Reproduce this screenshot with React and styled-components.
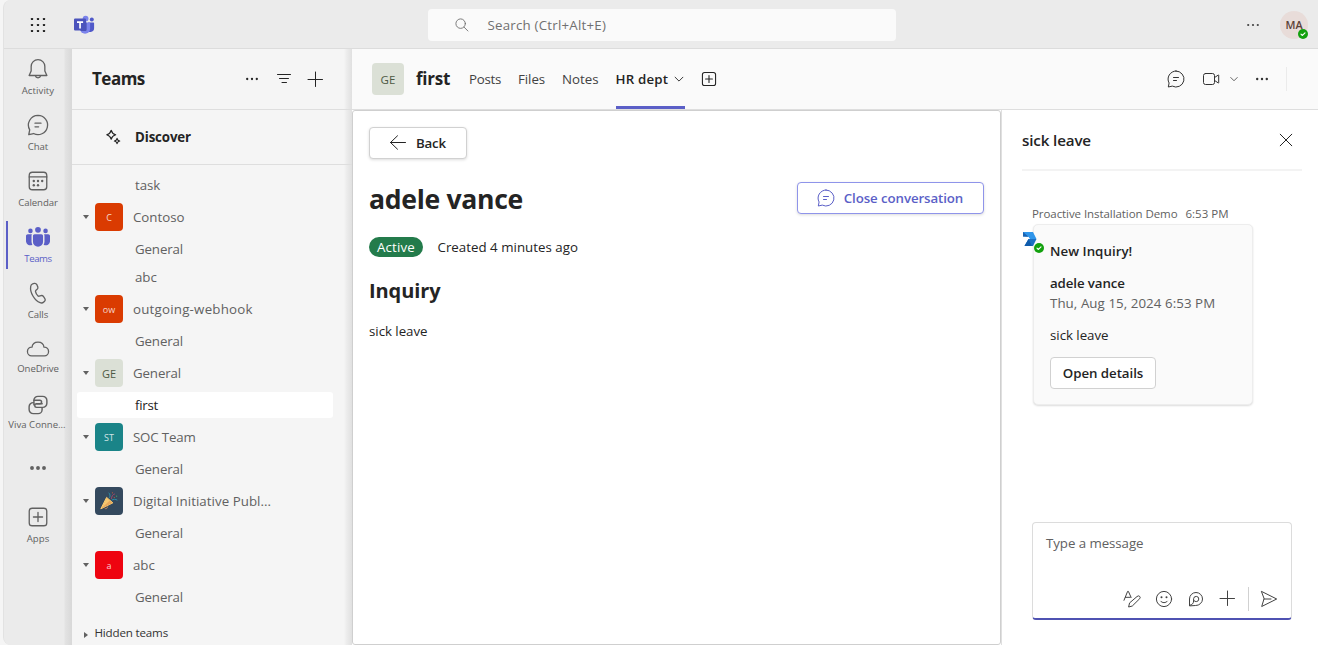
import React from "react";
import styled, { createGlobalStyle } from "styled-components";

const GlobalStyle = createGlobalStyle`
  * { box-sizing: border-box; }
  body {
    margin: 0;
    background: #f5f5f5;
    font-family: "Open Sans", "Noto Sans", sans-serif;
    color: #242424;
    overflow: hidden;
  }
  button { font-family: inherit; }
`;

const Window = styled.div`
  height: 645px;
  margin-left: 3px;
  display: flex;
  flex-direction: column;
  background: #ebebeb;
  border-left: 1px solid #e2e2e2;
  border-radius: 8px 0 0 8px;
  overflow: hidden;
`;

const Text = styled.span`
  font-size: ${(p) => p.$size || 13.3}px;
  font-weight: ${(p) => p.$weight || 400};
  letter-spacing: ${(p) => p.$ls || 0}px;
  color: ${(p) => p.$color || "inherit"};
  white-space: nowrap;
`;

/* ---------- icons ---------- */

const Glyph = styled.svg`
  display: block;
  flex: none;
  fill: none;
  stroke: currentColor;
  stroke-width: ${(p) => p.$stroke || 1};
  stroke-linecap: round;
  stroke-linejoin: round;
`;

const Icon = ({ size = 20, stroke, children }) => (
  <Glyph width={size} height={size} viewBox="0 0 20 20" $stroke={stroke}>
    {children}
  </Glyph>
);

const Dots = ({ size = 20, r = 1.15, gap = 4.8 }) => (
  <Icon size={size}>
    <g fill="currentColor" stroke="none">
      <circle cx={10 - gap} cy="10" r={r} />
      <circle cx="10" cy="10" r={r} />
      <circle cx={10 + gap} cy="10" r={r} />
    </g>
  </Icon>
);

const WaffleIcon = () => (
  <Icon>
    <g fill="#242424" stroke="none">
      {[4, 10, 16].map((y) => [4, 10, 16].map((x) => (
        <rect key={`${x}-${y}`} x={x - 1.1} y={y - 1.1} width="2.2" height="2.2" rx="0.6" />
      )))}
    </g>
  </Icon>
);

const TeamsLogo = () => (
  <Glyph width="22" height="20" viewBox="0 0 22 20">
    <g stroke="none">
      <circle cx="18.8" cy="4.6" r="2" fill="#5059c9" />
      <path d="M15 7.6h5.4a.7.7 0 0 1 .7.7v5a3.6 3.6 0 0 1-3.4 3.6h-1.8z" fill="#5059c9" />
      <circle cx="12.6" cy="3.6" r="2.9" fill="#7b83eb" />
      <path d="M7 7.6h9.3c.5 0 .8.4.8.8v5.3a5 5 0 0 1-10.1 0z" fill="#7b83eb" />
      <path d="M9 7.6h4.6v7.1a1.2 1.2 0 0 1-1.2 1.2H7.6z" fill="#3a41a0" opacity=".75" />
      <rect x="1" y="3.6" width="12" height="12" rx="1.1" fill="#4b53bc" />
      <path d="M4 6.3h6.1v1.6H7.9v5.5H6.2V7.9H4z" fill="#fff" />
    </g>
  </Glyph>
);

const BellIcon = () => (
  <Icon size={24} stroke={1.1}>
    <path d="M10 2.2a5.7 5.7 0 0 0-5.7 5.7v3.8L2.6 15.4h14.8l-1.7-3.7V7.9a5.7 5.7 0 0 0-5.7-5.7z" />
    <path d="M7.8 15.6a2.25 2.25 0 0 0 4.4 0" />
  </Icon>
);

const ChatIcon = ({ size = 24, stroke = 1.1 }) => (
  <Icon size={size} stroke={stroke}>
    <path d="M10 2a8 8 0 1 1-3.7 15.1L2.3 18l.8-4A8 8 0 0 1 10 2z" />
    <path d="M7.5 8.5h5M7.5 11.5h3" />
  </Icon>
);

const CalendarIcon = () => (
  <Icon size={24} stroke={1.1}>
    <rect x="2.7" y="2.7" width="14.6" height="14.6" rx="2.6" />
    <path d="M2.7 6.6h14.6" />
    <g fill="currentColor" stroke="none">
      <circle cx="6.5" cy="10" r="1" />
      <circle cx="10" cy="10" r="1" />
      <circle cx="13.5" cy="10" r="1" />
      <circle cx="6.5" cy="13.5" r="1" />
      <circle cx="10" cy="13.5" r="1" />
    </g>
  </Icon>
);

const PeopleIcon = () => (
  <Icon size={24}>
    <g fill="currentColor" stroke="none">
      <circle cx="3.7" cy="4.9" r="1.9" />
      <circle cx="10" cy="4" r="2.4" />
      <circle cx="16.3" cy="4.9" r="1.9" />
      <path d="M7.2 7.7h5.6c.8 0 1.4.6 1.4 1.4v4.8a4.2 4.2 0 0 1-8.4 0V9.1c0-.8.6-1.4 1.4-1.4z" />
      <path d="M1.5 7.7h3.5c-.3.4-.4.9-.4 1.4v4.7c0 1 .3 1.9.7 2.700A3.600 3.600 0 0 1 0 13.100V9.200c0-.8.7-1.500 1.500-1.500zM18.500 7.700h-3.500c.3.4.4.9.4 1.400v4.700c0 1-.3 1.900-.7 2.700a3.600 3.600 0 0 0 5.300-3.400V9.200c0-.8-.7-1.500-1.500-1.500z" />
    </g>
  </Icon>
);

const PhoneIcon = () => (
  <Icon size={24} stroke={1.1}>
    <path d="M5.500 2.400l1.400-.4c.9-.2 1.700.2 2.100 1l.8 1.900c.3.700.1 1.500-.5 2l-1.200 1.100c-.2.200-.3.400-.2.700.2 1.400 1.300 3.100 2.300 3.900.2.200.5.200.8.100l1.500-.5c.7-.2 1.500 0 2 .7l1.200 1.700c.5.700.4 1.600-.2 2.200l-.7.7c-.8.8-2 1-3 .6-4.700-1.800-8.700-8.700-7.900-13.500.1-1.100.6-1.900 1.600-2.200z" />
  </Icon>
);

const CloudIcon = () => (
  <Icon size={24} stroke={1.1}>
    <path d="M5 8.500C5.300 5.800 7.300 4.200 10 4.200s4.700 1.600 5 4.300a3.650 3.650 0 0 1 .3 7.300H4.700a3.650 3.650 0 0 1 .3-7.300z" />
  </Icon>
);

const VivaIcon = () => (
  <Icon size={24} stroke={1.2}>
    <path d="M6.600 9.900V6.100a3.300 3.300 0 0 1 3.300-3.300h4a3.500 3.500 0 0 1 3.500 3.500v2.200a3.500 3.500 0 0 1-3.500 3.500H8.800a1.500 1.500 0 0 1 0-3h4.700" />
    <path d="M13.400 12.200v1.700a3.300 3.300 0 0 1-3.300 3.300h-4a3.500 3.500 0 0 1-3.500-3.500v-2.200A3.500 3.500 0 0 1 6.100 8M6.600 6h4.900a1.500 1.500 0 0 1 0 3H8.800" />
  </Icon>
);

const PlusBoxIcon = ({ size = 24, stroke = 1.1 }) => (
  <Icon size={size} stroke={stroke}>
    <rect x="2.7" y="2.7" width="14.6" height="14.6" rx="2.4" />
    <path d="M10 6.200v7.600M6.200 10h7.600" />
  </Icon>
);

const FilterIcon = () => (
  <Icon><path d="M3.500 5.500h13M5.500 9.500h9M8 13.500h4.500" /></Icon>
);
const PlusIcon = () => (
  <Icon><path d="M10.500 3v14.500M3 10.500h14.500" /></Icon>
);
const AttachIcon = () => (
  <Icon><path d="M9.500 2v14.500M2 9.500h14.500" /></Icon>
);
const SparkleIcon = () => (
  <Icon size={18} stroke={1.2}>
    <path d="M8 2.500Q9 6.500 13 7.500Q9 8.500 8 12.500Q7 8.500 3 7.500Q7 6.500 8 2.500zM14.500 11.500Q15 14 17.500 14.500Q15 15 14.500 17.500Q14 15 11.500 14.500Q14 14 14.500 11.500z" />
  </Icon>
);
const SearchIcon = () => (
  <Icon size={16} stroke={1.15}><circle cx="8.3" cy="8.3" r="5.9" /><path d="M12.600 12.700l4.800 4.800" /></Icon>
);
const ChevronIcon = ({ size = 12 }) => (
  <Icon size={size} stroke={1.5}><path d="M3.500 7l6.500 6.500L16.500 7" /></Icon>
);
const VideoIcon = () => (
  <Icon><rect x="2.5" y="4.5" width="11" height="11" rx="2" /><path d="M13.500 8.600l3.800-2.600c.2-.1.4 0 .4.300v7.400c0 .3-.2.4-.4.300l-3.800-2.600" /></Icon>
);
const ArrowLeftIcon = () => (
  <Icon><path d="M17.500 9.500H2.500M9.500 2.800L2.500 9.500l7 6.700" /></Icon>
);
const CloseIcon = () => (
  <Icon><path d="M4.200 4.200l11.600 11.600M15.800 4.200L4.200 15.800" /></Icon>
);
const FormatIcon = () => (
  <Icon>
    <path d="M2 11.300L5.600 2.400h.8l2.700 6M3.400 8.300h4.900" />
    <path d="M15.300 7.300a1.700 1.700 0 0 1 2.400 2.400L10.300 17l-3.700 1 .9-3.700z" />
  </Icon>
);
const SmileIcon = () => (
  <Icon>
    <circle cx="10" cy="10" r="7.6" />
    <path d="M6.700 12.200c1.600 2 5 2 6.600 0" />
    <g fill="currentColor" stroke="none"><circle cx="7.5" cy="8.3" r="1" /><circle cx="12.5" cy="8.3" r="1" /></g>
  </Icon>
);
const LoopIcon = () => (
  <Icon>
    <path d="M3.500 16.500V10A6.500 6.500 0 1 1 10 16.500z" />
    <path d="M3.700 16.300c2.500-.4 3.900-2 3.900-4.300V9.700a2.600 2.600 0 1 1 2.700 2.900c-.9 0-1.600-.3-2.200-.9" />
  </Icon>
);
const SendIcon = () => (
  <Icon><path d="M2.700 2.500L17.700 10 2.700 17.500 5 10zM5 10h7" /></Icon>
);

const Caret = styled.span`
  flex: none;
  width: 0;
  height: 0;
  border: 3.5px solid transparent;
  ${(p) => (p.$closed
    ? "border-left: 4px solid #616161; border-right: 0;"
    : "border-top: 4px solid #616161; border-bottom: 0;")}
`;

const PresenceDot = styled.span`
  position: absolute;
  right: ${(p) => p.$right || 0}px;
  bottom: ${(p) => p.$bottom || 0}px;
  width: 10px;
  height: 10px;
  border-radius: 50%;
  background: #13a10e;
  color: #fff;
  display: flex;
  align-items: center;
  justify-content: center;
`;

const Presence = (props) => (
  <PresenceDot {...props}>
    <Icon size={8} stroke={2.8}><path d="M5 10.500l3.500 3.200L15 7" /></Icon>
  </PresenceDot>
);

/* ---------- top bar ---------- */

const TopBar = styled.header`
  flex: none;
  height: 49px;
  display: grid;
  grid-template-columns: 424px 468px 1fr;
  align-items: center;
  border-bottom: 1px solid #dcdcdc;
`;
const Brand = styled.div`
  display: flex;
  align-items: center;
  gap: 25px;
  padding: 1px 0 0 24px;
`;
const SearchBox = styled.div`
  height: 32px;
  margin-top: 1px;
  border-radius: 4px;
  background: #fafafa;
  display: flex;
  align-items: center;
  gap: 17.5px;
  padding-left: 26px;
  color: #707070;
`;
const Account = styled.div`
  display: flex;
  align-items: center;
  justify-content: flex-end;
  gap: 17px;
  padding: 2px 10px 0 0;
  color: #424242;
`;
const Avatar = styled.div`
  position: relative;
  width: 28px;
  height: 28px;
  padding-bottom: 1px;
  border-radius: 50%;
  background: #e8dcd9;
  display: flex;
  align-items: center;
  justify-content: center;
`;

/* ---------- rail ---------- */

const Body = styled.div`
  flex: 1;
  min-height: 0;
  display: flex;
`;
const Rail = styled.nav`
  flex: none;
  width: 68px;
  background: linear-gradient(to right, #ebebeb 60px, #e3e3e3 61px, #d8d8d8);
`;
const RailItem = styled.div`
  height: 56px;
  padding-top: ${(p) => p.$top || 8}px;
  display: flex;
  flex-direction: column;
  align-items: center;
  color: ${(p) => (p.$active ? "#5b5fc7" : "#616161")};
  background: ${(p) => (p.$active ? "linear-gradient(#5b5fc7, #5b5fc7) 2px 4px / 2px 48px no-repeat" : "none")};
`;
const RailLabel = styled(Text)`
  line-height: 14px;
  margin-top: ${(p) => (p.$tight ? 1 : 3)}px;
  padding-right: ${(p) => p.$inset || 0}px;
`;

/* ---------- team list ---------- */

const Sidebar = styled.aside`
  flex: none;
  width: 280px;
  background: linear-gradient(to right, #f5f5f5 272px, #eeeeee 274px, #e0e0e0);
`;
const SideHeader = styled.div`
  height: 61px;
  border-bottom: 1px solid #dedede;
  display: flex;
  align-items: center;
  gap: 12px;
  padding: 0 27px 0 20px;
`;
const SideTitle = styled.div`
  flex: 1;
  display: flex;
  padding-bottom: 2px;
`;
const SideActions = styled.div`
  display: flex;
  gap: 12px;
  margin-right: -1px;
`;
const Discover = styled.div`
  height: 55px;
  border-bottom: 1px solid #dedede;
  display: flex;
  align-items: center;
  gap: 13px;
  padding-left: 32px;
`;
const TeamList = styled.div`
  padding-top: 6px;
  color: #616161;
`;
const Channel = styled.div`
  height: ${(p) => (p.$active ? 26 : 28)}px;
  margin: ${(p) => (p.$active ? "1px 19px 1px 5px" : "0 19px 0 5px")};
  padding-left: 58px;
  display: flex;
  align-items: center;
  border-radius: 3px;
  background: ${(p) => (p.$active ? "#fff" : "transparent")};
  color: ${(p) => (p.$active ? "#242424" : "inherit")};
`;
const TeamRow = styled.div`
  height: 36px;
  display: flex;
  align-items: center;
  padding-left: 11px;
`;
const TeamTile = styled.div`
  flex: none;
  width: ${(p) => p.$size || 28}px;
  height: ${(p) => p.$size || 28}px;
  margin: 0 10px 0 6px;
  border-radius: 4px;
  background: ${(p) => p.$bg};
  color: ${(p) => p.$fg || "rgba(255,255,255,.8)"};
  display: flex;
  align-items: center;
  justify-content: center;
`;
const HiddenRow = styled.div`
  height: 43px;
  display: flex;
  align-items: center;
  gap: 6.5px;
  padding-left: 12px;
  color: #333;
`;
const CaretDrop = styled.span`
  display: flex;
  padding-top: 5px;
`;

/* ---------- main ---------- */

const Main = styled.main`
  flex: 1;
  min-width: 0;
  display: flex;
  flex-direction: column;
  background: #fff;
`;
const ChannelHeader = styled.div`
  flex: none;
  height: 61px;
  background: #fafafa;
  border-bottom: 1px solid #dedede;
  display: flex;
  align-items: center;
  padding: 0 31px 0 20px;
`;
const HeaderTile = styled(TeamTile)`
  margin: 0 12px 0 0;
`;
const ChannelName = styled(Text)`
  padding-bottom: 2px;
`;
const Tabs = styled.div`
  align-self: stretch;
  display: flex;
  gap: 17px;
  margin: 0 15px 0 19px;
`;
const Tab = styled.div`
  display: flex;
  align-items: center;
  gap: 5px;
  padding-top: ${(p) => (p.$active ? 3 : 0)}px;
  border-bottom: ${(p) => (p.$active ? "3px solid #5b5fc7" : "0")};
  color: ${(p) => (p.$active ? "#242424" : "#424242")};
`;
const HeaderActions = styled.div`
  display: flex;
  align-items: center;
  color: #333;
  margin-left: auto;
`;
const ActionGroup = styled.div`
  display: flex;
  align-items: center;
  gap: ${(p) => p.$gap || 0}px;
  margin-right: ${(p) => p.$mr || 0}px;
`;
const Divider = styled.span`
  width: 1px;
  height: ${(p) => p.$h}px;
  background: ${(p) => p.$color};
`;
const Split = styled.div`
  flex: 1;
  min-height: 0;
  display: flex;
`;
const Content = styled.section`
  width: 649px;
  border: 1px solid #cfcfcf;
  border-radius: 3px;
  padding: 16px 16px 0;
`;
const Button = styled.button`
  height: 32px;
  width: ${(p) => p.$w}px;
  padding: 0 ${(p) => p.$inset || 0}px 0 0;
  display: flex;
  align-items: center;
  justify-content: center;
  gap: ${(p) => p.$gap || 8}px;
  background: #fff;
  border: 1px solid ${(p) => (p.$brand ? "#8f94ea" : "#d1d1d1")};
  border-radius: 4px;
  color: ${(p) => (p.$brand ? "#5b5fc7" : "#242424")};
  box-shadow: ${(p) => (p.$flat ? "none" : "0 1px 3px rgba(0,0,0,.14)")};
`;
const TitleRow = styled.div`
  display: flex;
  align-items: center;
  justify-content: space-between;
  margin-top: 19px;
  height: 40px;
`;
const PageTitle = styled(Text)`
  padding-top: 2px;
`;
const StatusRow = styled.div`
  display: flex;
  align-items: center;
  gap: 14.5px;
  height: 20px;
  margin-top: 19px;
`;
const Badge = styled.span`
  width: 54px;
  height: 20px;
  border-radius: 10px;
  background: #237b4b;
  color: #fff;
  display: flex;
  align-items: center;
  justify-content: center;
`;
const SectionTitle = styled.div`
  height: 28px;
  margin-top: 19px;
  display: flex;
  align-items: center;
`;
const Paragraph = styled.div`
  height: 20px;
  margin-top: 17px;
  display: flex;
  align-items: center;
`;

/* ---------- conversation panel ---------- */

const Panel = styled.section`
  flex: 1;
  display: flex;
  flex-direction: column;
  border-left: 1px solid #e0e0e0;
  padding: 0 16px 0 20px;
`;
const PanelHeader = styled.div`
  height: 61px;
  border-bottom: 2px solid #f3f3f3;
  display: flex;
  align-items: center;
  justify-content: space-between;
  padding-right: 6px;
`;
const Byline = styled.div`
  display: flex;
  align-items: center;
  gap: 8px;
  height: 16px;
  margin: 34px 0 3px 10px;
  color: #616161;
`;
const Message = styled.div`
  position: relative;
  margin-left: 11px;
  width: 220px;
  height: 181px;
  padding: 16px;
  background: #fafafa;
  border: 1px solid #ededed;
  border-radius: 5px;
  box-shadow: 0 1px 2px rgba(0,0,0,.14);
  color: #242424;
`;
const Line = styled.div`
  height: 20px;
  display: flex;
  align-items: center;
  margin-bottom: ${(p) => p.$mb || 0}px;
  color: ${(p) => p.$color || "inherit"};
`;
const BotBadge = styled.div`
  position: absolute;
  left: -11px;
  top: 7px;
  width: 22px;
  height: 22px;
`;
const Composer = styled.div`
  margin: auto 10px 25px 10px;
  height: 98px;
  border: 1px solid #dcdcdc;
  border-bottom: 2px solid #4f52b2;
  border-radius: 4px;
  padding: 11px 12px 0 13px;
  display: flex;
  flex-direction: column;
  justify-content: space-between;
`;
const Tools = styled.div`
  display: flex;
  align-items: center;
  justify-content: flex-end;
  gap: 12px;
  height: 24px;
  margin-bottom: 7px;
  color: #424242;
`;
const SendGroup = styled.div`
  display: flex;
  align-items: center;
  gap: 10px;
  margin-left: -2px;
`;

const PartyIcon = () => (
  <Glyph width="20" height="20" viewBox="0 0 20 20">
    <path d="M2 17.500L7.600 6.400l6 5.200z" fill="#f6c770" stroke="#f6c770" strokeWidth="1" />
    <path d="M2 17.500l8.600-7.800 3 2z" fill="#e9a85c" stroke="none" />
    <path d="M5.500 16.800c.8 1.600 2.800 1.200 3-.8" stroke="#c98a5a" />
    <path d="M10.500 6.500c1-1.500.5-3.500-.5-4.500M13 9c1.500-1 3.500-1 5 0" stroke="#2d8fa8" />
    <path d="M12.500 7.500c0-2 1-4 3-4.500" stroke="#a0476a" />
    <circle cx="13.5" cy="1.8" r=".6" fill="#c5533e" stroke="none" />
    <circle cx="17.6" cy="5.2" r=".6" fill="#4f9e63" stroke="none" />
    <circle cx="15.3" cy="6.5" r=".6" fill="#c5533e" stroke="none" />
  </Glyph>
);

const BotIcon = () => (
  <Glyph width="15" height="15" viewBox="0 0 15 15">
    <g stroke="none">
      <path d="M0 0h10l3.500 7H7L5.500 4.800 0 4.500z" fill="#2f95ea" />
      <path d="M5.500 7h8L10 14H1.500z" fill="#1b6fc4" />
      <path d="M1.500 14l4-7L9 14z" fill="#0f5bab" />
      <path d="M0 0l5.500 4.800L0 4.500z" fill="#1a62b0" />
    </g>
  </Glyph>
);

const railItems = [
  { label: "Activity", ls: 0.07, icon: <BellIcon /> },
  { label: "Chat", ls: -0.05, icon: <ChatIcon /> },
  { label: "Calendar", ls: -0.09, icon: <CalendarIcon /> },
  { label: "Teams", ls: -0.39, icon: <PeopleIcon />, active: true },
  { label: "Calls", ls: -0.05, icon: <PhoneIcon /> },
  { label: "OneDrive", ls: -0.09, icon: <CloudIcon />, tight: true },
  { label: "Viva Conne...", ls: 0, icon: <VivaIcon />, tight: true, inset: 2 },
];

const general = { name: "General", ls: -0.13 };

const teams = [
  { name: "Contoso", ls: -0.02, tile: "C", bg: "#da3b01", channels: [general, { name: "abc", ls: -0.05 }] },
  { name: "outgoing-webhook", ls: 0.22, tile: "ow", bg: "#da3b01", channels: [general] },
  { name: "General", ls: -0.13, tile: "GE", bg: "#dbe0d6", fg: "#4d5943", tileSize: 11, channels: [{ name: "first", ls: -0.27, active: true }] },
  { name: "SOC Team", ls: -0.18, tile: "ST", bg: "#1a8488", channels: [general] },
  { name: "Digital Initiative Publ...", ls: 0.04, tile: <PartyIcon />, bg: "#34495e", channels: [general] },
  { name: "abc", ls: -0.05, tile: "a", bg: "#ee0410", channels: [general] },
];

const ChannelItem = ({ channel }) => (
  <Channel $active={channel.active}><Text $ls={channel.ls}>{channel.name}</Text></Channel>
);

export default function App() {
  return (
    <>
      <GlobalStyle />
      <Window>
        <TopBar>
          <Brand><WaffleIcon /><TeamsLogo /></Brand>
          <SearchBox><SearchIcon /><Text $ls={0.22}>Search (Ctrl+Alt+E)</Text></SearchBox>
          <Account>
            <Dots r={1.1} />
            <Avatar>
              <Text $size={10.8} $weight={600} $color="#5c4038">MA</Text>
              <Presence />
            </Avatar>
          </Account>
        </TopBar>
        <Body>
          <Rail>
            {railItems.map((item) => (
              <RailItem key={item.label} $active={item.active}>
                {item.icon}
                <RailLabel $size={9.6} $ls={item.ls} $tight={item.tight} $inset={item.inset}>{item.label}</RailLabel>
              </RailItem>
            ))}
            <RailItem $top={15}><Dots size={24} r={1.6} gap={5} /></RailItem>
            <RailItem>
              <PlusBoxIcon />
              <RailLabel $size={9.6} $ls={0.03}>Apps</RailLabel>
            </RailItem>
          </Rail>
          <Sidebar>
            <SideHeader>
              <SideTitle><Text $size={17} $weight={700} $ls={-0.5}>Teams</Text></SideTitle>
              <SideActions><Dots /><FilterIcon /></SideActions>
              <PlusIcon />
            </SideHeader>
            <Discover><SparkleIcon /><Text $weight={700} $ls={-0.13}>Discover</Text></Discover>
            <TeamList>
              <ChannelItem channel={{ name: "task", ls: -0.11 }} />
              {teams.map((team) => (
                <React.Fragment key={team.name}>
                  <TeamRow>
                    <Caret />
                    <TeamTile $bg={team.bg} $fg={team.fg}><Text $size={team.tileSize || 9}>{team.tile}</Text></TeamTile>
                    <Text $ls={team.ls}>{team.name}</Text>
                  </TeamRow>
                  {team.channels.map((channel) => <ChannelItem key={channel.name} channel={channel} />)}
                </React.Fragment>
              ))}
            </TeamList>
            <HiddenRow>
              <CaretDrop><Caret $closed /></CaretDrop>
              <Text $size={11.6} $ls={-0.18}>Hidden teams</Text>
            </HiddenRow>
          </Sidebar>
          <Main>
            <ChannelHeader>
              <HeaderTile $size={32} $bg="#dbe0d6" $fg="#4d5943"><Text $size={11.5}>GE</Text></HeaderTile>
              <ChannelName $size={17} $weight={700} $ls={-0.26}>first</ChannelName>
              <Tabs>
                <Tab><Text $ls={-0.28}>Posts</Text></Tab>
                <Tab><Text $ls={-0.08}>Files</Text></Tab>
                <Tab><Text $ls={0}>Notes</Text></Tab>
                <Tab $active><Text $weight={600} $ls={0.15}>HR dept</Text><ChevronIcon /></Tab>
              </Tabs>
              <PlusBoxIcon size={18} stroke={1.2} />
              <HeaderActions>
                <ActionGroup $mr={15}><ChatIcon size={20} stroke={1} /></ActionGroup>
                <ActionGroup $gap={8} $mr={13}><VideoIcon /><ChevronIcon size={10} /></ActionGroup>
                <ActionGroup $mr={14}><Dots r={1.2} /></ActionGroup>
                <Divider $h={24} $color="#ebebeb" />
              </HeaderActions>
            </ChannelHeader>
            <Split>
              <Content>
                <Button $w={98} $inset={2}><ArrowLeftIcon /><Text $weight={600} $ls={-0.18}>Back</Text></Button>
                <TitleRow>
                  <PageTitle $size={26.6} $weight={700} $ls={-0.31}>adele vance</PageTitle>
                  <Button $brand $w={187} $inset={2}>
                    <ChatIcon size={20} stroke={1} />
                    <Text $weight={600} $ls={-0.1}>Close conversation</Text>
                  </Button>
                </TitleRow>
                <StatusRow>
                  <Badge><Text $ls={0.17}>Active</Text></Badge>
                  <Text $ls={0.02}>Created 4 minutes ago</Text>
                </StatusRow>
                <SectionTitle><Text $size={20} $weight={700} $ls={-0.09}>Inquiry</Text></SectionTitle>
                <Paragraph><Text $ls={-0.03}>sick leave</Text></Paragraph>
              </Content>
              <Panel>
                <PanelHeader>
                  <Text $size={15.2} $weight={600} $ls={-0.15}>sick leave</Text>
                  <CloseIcon />
                </PanelHeader>
                <Byline>
                  <Text $size={11.5} $ls={-0.07}>Proactive Installation Demo</Text>
                  <Text $size={11.5}>6:53 PM</Text>
                </Byline>
                <Message>
                  <BotBadge><BotIcon /><Presence $right={1} $bottom={1} /></BotBadge>
                  <Line $mb={12}><Text $weight={600} $ls={0.04}>New Inquiry!</Text></Line>
                  <Line><Text $weight={600} $ls={-0.11}>adele vance</Text></Line>
                  <Line $mb={12} $color="#616161"><Text $ls={0.07}>Thu, Aug 15, 2024 6:53 PM</Text></Line>
                  <Line $mb={12}><Text $ls={-0.03}>sick leave</Text></Line>
                  <Button $flat $w={106}><Text $weight={600} $ls={-0.05}>Open details</Text></Button>
                </Message>
                <Composer>
                  <Text $color="#616161" $ls={-0.07}>Type a message</Text>
                  <Tools>
                    <FormatIcon /><SmileIcon /><LoopIcon /><AttachIcon />
                    <SendGroup><Divider $h={24} $color="#d1d1d1" /><SendIcon /></SendGroup>
                  </Tools>
                </Composer>
              </Panel>
            </Split>
          </Main>
        </Body>
      </Window>
    </>
  );
}
